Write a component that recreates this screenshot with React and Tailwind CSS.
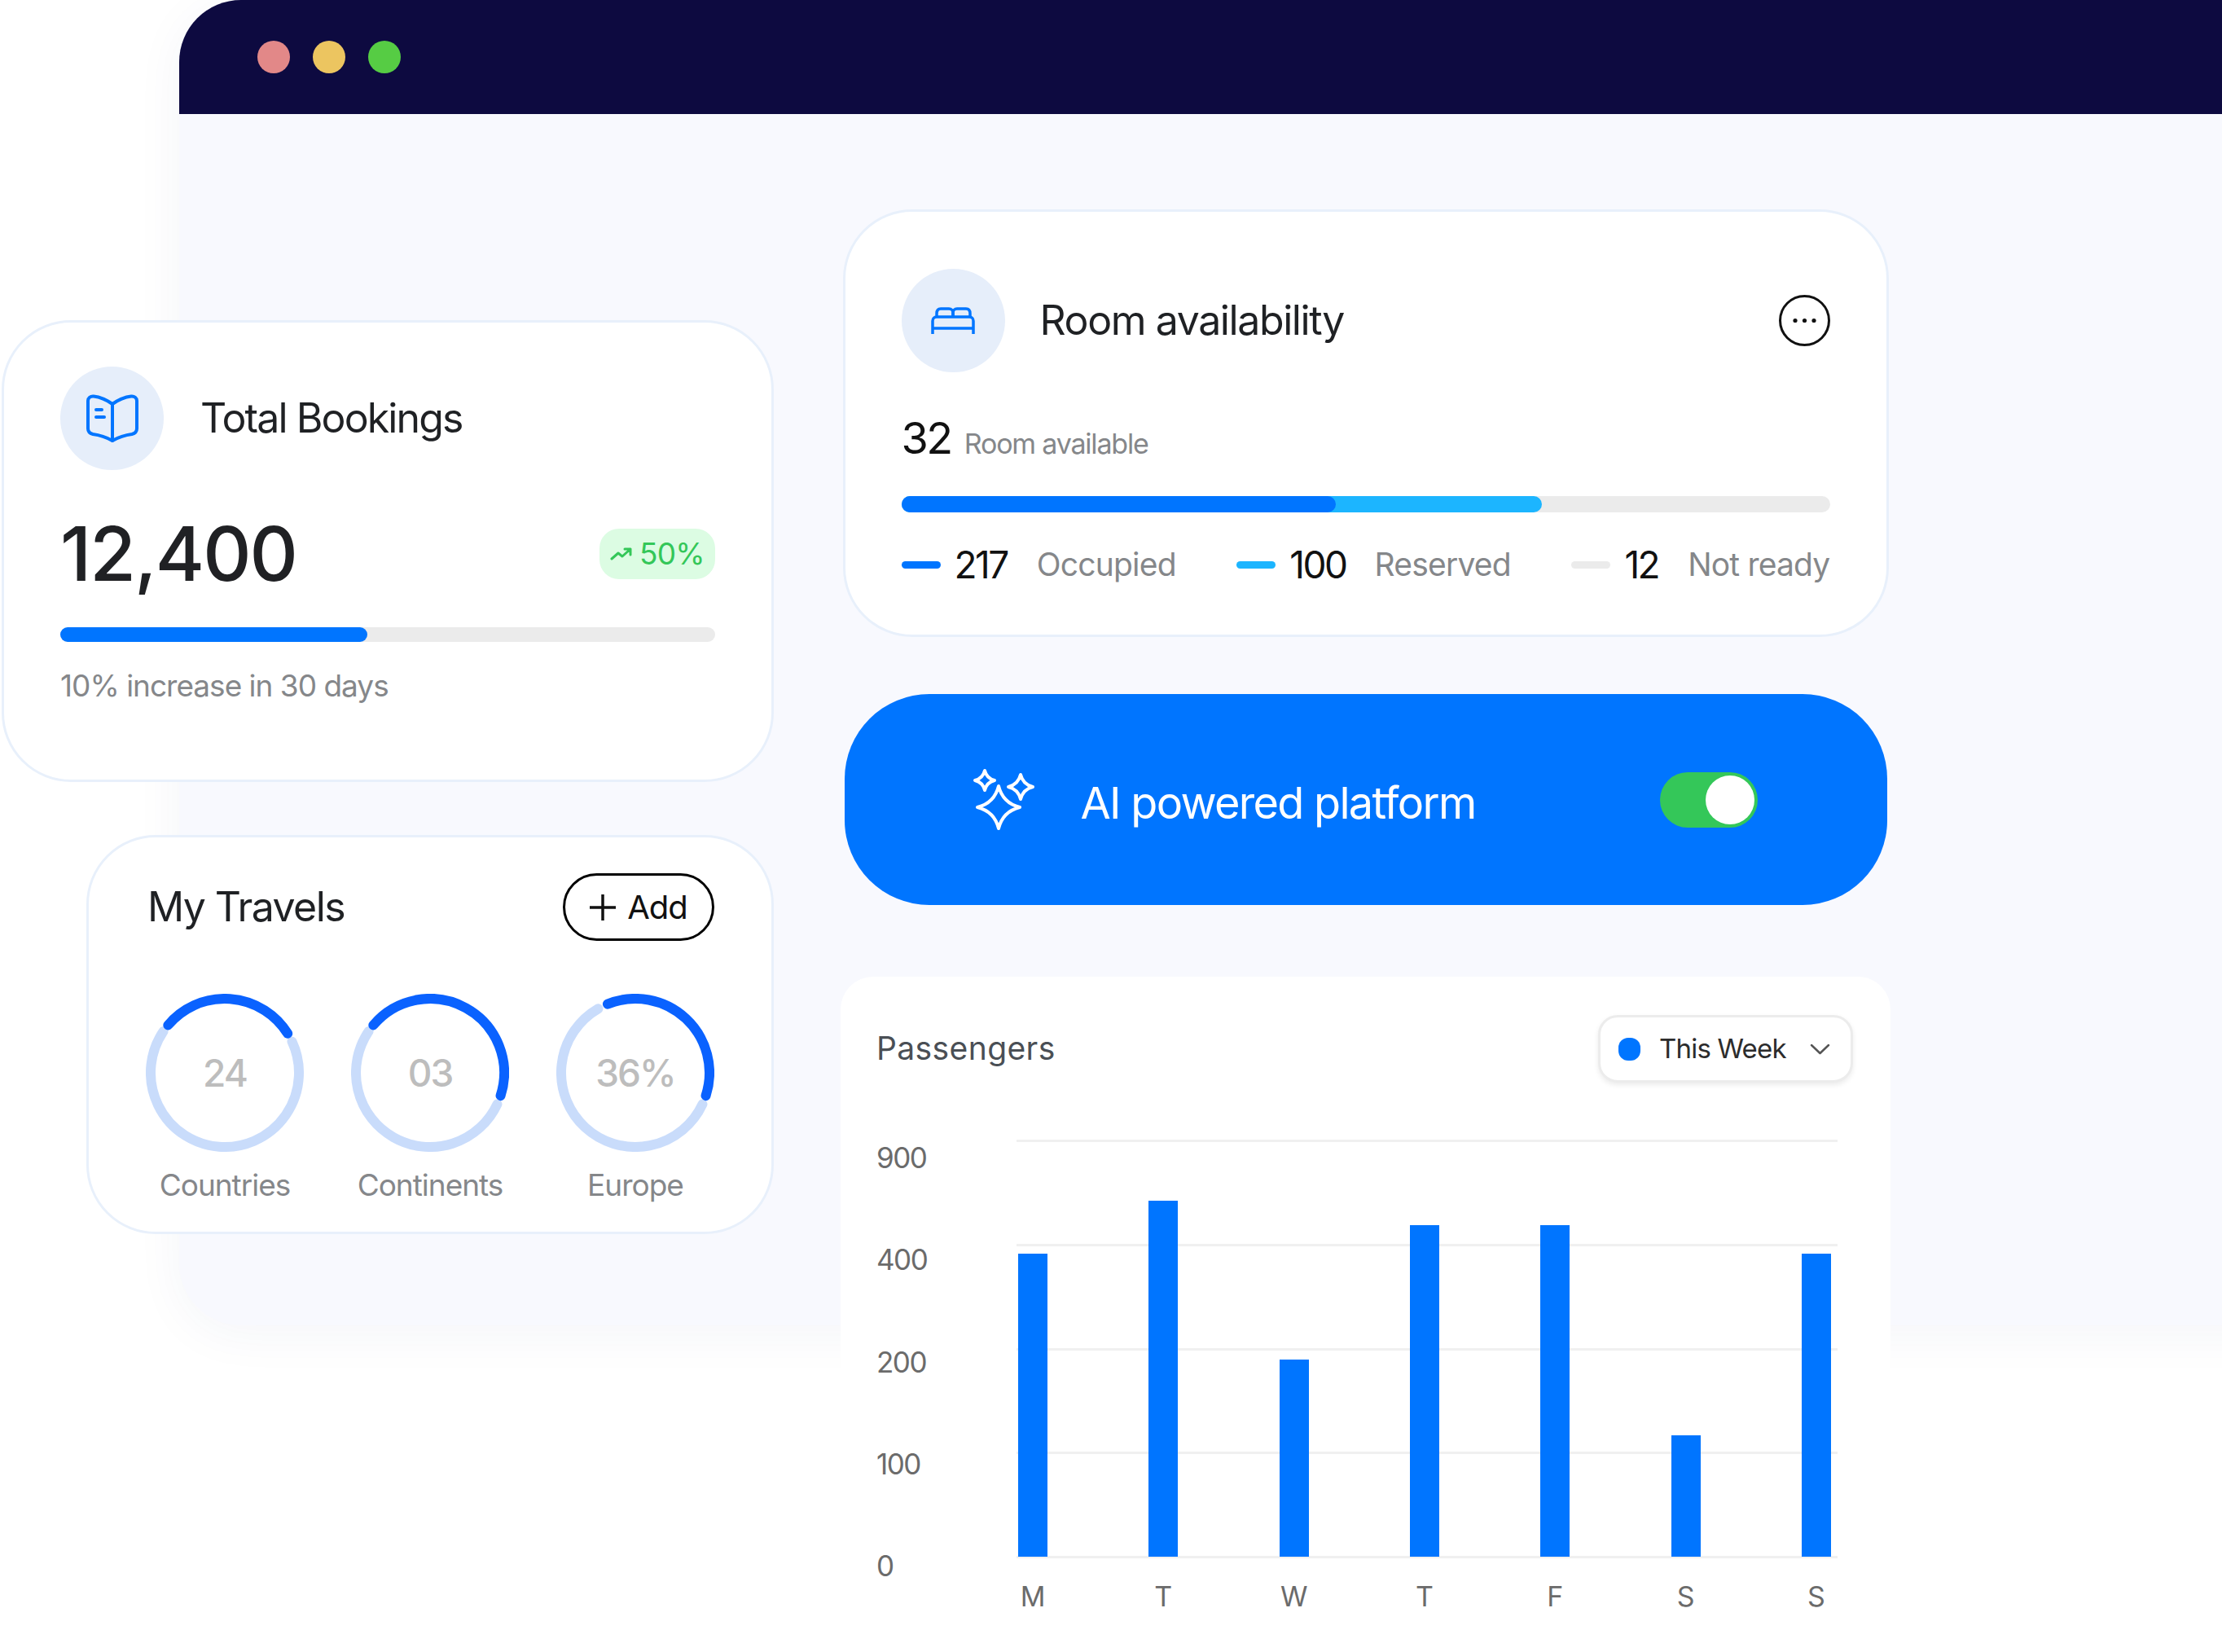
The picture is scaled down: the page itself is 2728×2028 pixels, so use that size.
const bars = [
  { day: 'M', height: 372 },
  { day: 'T', height: 437 },
  { day: 'W', height: 242 },
  { day: 'T', height: 407 },
  { day: 'F', height: 407 },
  { day: 'S', height: 149 },
  { day: 'S', height: 372 },
]

const rings = [
  { value: '24', label: 'Countries', blue: [-50, 58], track: [65, 304] },
  { value: '03', label: 'Continents', blue: [-50, 108], track: [115, 304] },
  { value: '36%', label: 'Europe', blue: [-22, 108], track: [115, 330] },
]

function arc(from, to) {
  const r = 91
  const point = (deg) => {
    const a = ((deg - 90) * Math.PI) / 180
    return `${97 + r * Math.cos(a)} ${97 + r * Math.sin(a)}`
  }
  const large = to - from > 180 ? 1 : 0
  return `M${point(from)} A${r} ${r} 0 ${large} 1 ${point(to)}`
}

function star(cx, cy, r) {
  const k = r * 0.2
  return `M${cx} ${cy - r} Q${cx + k} ${cy - k} ${cx + r} ${cy} Q${cx + k} ${cy + k} ${cx} ${cy + r} Q${cx - k} ${cy + k} ${cx - r} ${cy} Q${cx - k} ${cy - k} ${cx} ${cy - r}Z`
}

function BookIcon() {
  return (
    <svg width="64" height="60" viewBox="0 0 64 60" fill="none" stroke="#0075ff" strokeWidth="4" strokeLinecap="round" strokeLinejoin="round">
      <path d="M32 57V12C25 7 18 3.5 9 2.5C5 2 2 4.5 2 8V42C2 46 4 48 8 49C16 50 25 53 32 57Z" />
      <path d="M32 57V12C39 7 46 3.5 55 2.5C59 2 62 4.5 62 8V42C62 46 60 48 56 49C48 50 39 53 32 57Z" />
      <path d="M12 19H19M12 28H22" />
    </svg>
  )
}

function BedIcon() {
  return (
    <svg width="54" height="33" viewBox="0 0 54 33" fill="none" stroke="#0075ff" strokeWidth="3.5">
      <path d="M2 33V17C2 14 4 12 7 12H47C50 12 52 14 52 17V33" />
      <path d="M2 26H52" />
      <path d="M7 12V8C7 4 9 2 12 2H22C25 2 27 4 27 7V12" />
      <path d="M27 12V7C27 4 29 2 32 2H43C46 2 48 4 48 8V12" />
    </svg>
  )
}

function Ring({ ring }) {
  return (
    <div className="flex w-[194px] flex-col items-center">
      <div className="relative h-[194px] w-[194px]">
        <svg width="194" height="194" viewBox="0 0 194 194" fill="none" strokeWidth="12" strokeLinecap="round">
          <path d={arc(ring.track[0], ring.track[1])} stroke="#c9dcfb" />
          <path d={arc(ring.blue[0], ring.blue[1])} stroke="#0a62ff" />
        </svg>
        <span className="absolute inset-0 flex items-center justify-center text-[46px] font-medium tracking-[-2px] text-[#bdbdbd]">
          {ring.value}
        </span>
      </div>
      <span className="mt-[18px] whitespace-nowrap text-[37px] leading-[46px] tracking-[-1px] text-[#85878a]">
        {ring.label}
      </span>
    </div>
  )
}

function LegendItem({ color, value, label, gap }) {
  return (
    <div className="flex items-center">
      <span className={`h-[9px] w-[48px] rounded-full ${color}`}></span>
      <span className="ml-[17px] text-[46px] leading-[52px] tracking-[-2.5px] text-[#111]">{value}</span>
      <span className={`text-[39px] leading-[52px] tracking-[-0.8px] text-[#85878a] ${gap}`}>{label}</span>
    </div>
  )
}

export default function App() {
  return (
    <div className="relative h-[2028px] w-[2728px] overflow-hidden bg-white font-['Inter',sans-serif]">
      {/* browser window behind the cards */}
      <div className="absolute left-[220px] right-[-120px] top-0 h-[1627px] overflow-hidden rounded-tl-[76px] rounded-bl-[76px] bg-[#f8f9fe] shadow-[0_10px_60px_rgba(30,60,120,0.05)]">
        <div className="flex h-[140px] items-center gap-[28px] bg-[#0d0a40] pl-[96px]">
          <span className="h-[40px] w-[40px] rounded-full bg-[#e28888]"></span>
          <span className="h-[40px] w-[40px] rounded-full bg-[#ecc560]"></span>
          <span className="h-[40px] w-[40px] rounded-full bg-[#56cc44]"></span>
        </div>
      </div>

      <div className="absolute inset-0 flex items-start">
        {/* left column */}
        <div className="ml-[2px] mt-[393px] flex w-[948px] flex-col items-end gap-[65px]">
          <div className="h-[567px] w-[948px] rounded-[85px] border-[3px] border-[#e8f0fb] bg-white px-[69px] pt-[54px]">
            <div className="flex items-center gap-[45px]">
              <div className="flex h-[127px] w-[127px] items-center justify-center rounded-full bg-[#e6eefa]">
                <BookIcon />
              </div>
              <span className="text-[50px] tracking-[-1.9px] text-[#1f2124]">Total Bookings</span>
            </div>
            <div className="mt-[57px] flex h-[92px] items-center justify-between">
              <span className="text-[92px] font-medium leading-[92px] tracking-[-2px] text-[#202124]">12,400</span>
              <div className="flex h-[62px] w-[142px] items-center justify-center gap-[8px] rounded-[24px] bg-[#dcfce3]">
                <svg width="28" height="18" viewBox="0 0 28 18" fill="none" stroke="#34c759" strokeWidth="3" strokeLinecap="round" strokeLinejoin="round">
                  <path d="M2 15L10 8L15 12L25 3M18 3H25V10" />
                </svg>
                <span className="text-[37px] tracking-[-0.8px] text-[#34c759]">50%</span>
              </div>
            </div>
            <div className="mt-[44px] h-[18px] rounded-full bg-[#ebebeb]">
              <div className="h-[18px] w-[377px] rounded-full bg-[#0075ff]"></div>
            </div>
            <p className="mt-[32px] text-[37px] leading-[44px] tracking-[-1px] text-[#85878a]">10% increase in 30 days</p>
          </div>

          <div className="h-[490px] w-[844px] rounded-[85px] border-[3px] border-[#e8f0fb] bg-white px-[70px] pt-[44px]">
            <div className="flex items-center justify-between">
              <span className="pl-[2px] text-[50px] tracking-[-1.6px] text-[#1f2124]">My Travels</span>
              <button className="flex h-[83px] w-[186px] items-center justify-center gap-[14px] rounded-full border-[3px] border-black bg-white">
                <svg width="32" height="32" viewBox="0 0 32 32" fill="none" stroke="#111" strokeWidth="3.5">
                  <path d="M16 0V32M0 16H32" />
                </svg>
                <span className="text-[40px] tracking-[-1px] text-[#111]">Add</span>
              </button>
            </div>
            <div className="mt-[65px] flex gap-[58px]">
              {rings.map((ring) => (
                <Ring key={ring.label} ring={ring} />
              ))}
            </div>
          </div>
        </div>

        {/* right column */}
        <div className="ml-[82px] mt-[257px] flex w-[1289px] flex-col items-center">
          <div className="h-[525px] w-[1284px] rounded-[85px] border-[3px] border-[#e8f0fb] bg-white px-[69px] pt-[70px]">
            <div className="flex items-center gap-[43px]">
              <div className="flex h-[127px] w-[127px] items-center justify-center rounded-full bg-[#e6eefa]">
                <BedIcon />
              </div>
              <span className="text-[50px] tracking-[-1.4px] text-[#1f2124]">Room availability</span>
              <svg className="ml-auto" width="63" height="63" viewBox="0 0 63 63" fill="none">
                <circle cx="31.5" cy="31.5" r="30" stroke="#111" strokeWidth="3" />
                <circle cx="20" cy="31.5" r="2.6" fill="#111" />
                <circle cx="31.5" cy="31.5" r="2.6" fill="#111" />
                <circle cx="43" cy="31.5" r="2.6" fill="#111" />
              </svg>
            </div>
            <div className="mt-[51px] flex h-[60px] items-baseline gap-[16px]">
              <span className="text-[54px] leading-[60px] tracking-[-2.5px] text-[#111]">32</span>
              <span className="text-[34px] tracking-[-1.2px] text-[#85878a]">Room available</span>
            </div>
            <div className="mt-[41px] flex h-[20px] rounded-full bg-[#ebebeb]">
              <div className="relative h-[20px] w-[786px] rounded-full bg-[#1cb5ff]">
                <div className="h-[20px] w-[533px] rounded-full bg-[#0075ff]"></div>
              </div>
            </div>
            <div className="mt-[38px] flex justify-between">
              <LegendItem color="bg-[#0075ff]" value="217" label="Occupied" gap="ml-[36px]" />
              <LegendItem color="bg-[#1cb5ff]" value="100" label="Reserved" gap="ml-[35px]" />
              <LegendItem color="bg-[#ebebeb]" value="12" label="Not ready" gap="ml-[36px]" />
            </div>
          </div>

          <div className="mt-[70px] flex h-[259px] w-[1280px] items-center rounded-[104px] bg-[#0075ff] pl-[154px] pr-[159px]">
            <svg width="80" height="85" viewBox="0 0 80 85" fill="none" stroke="white" strokeWidth="4" strokeLinejoin="round">
              <path d={star(35, 52, 26)} />
              <path d={star(18, 19, 12)} />
              <path d={star(62, 27, 15)} />
            </svg>
            <span className="ml-[56px] mt-[8px] text-[54px] tracking-[-1.7px] text-white">AI powered platform</span>
            <div className="ml-auto flex h-[68px] w-[120px] items-center justify-end rounded-full bg-[#34c759] pr-[4px]">
              <span className="h-[60px] w-[60px] rounded-full bg-white"></span>
            </div>
          </div>

          <div className="mt-[88px] h-[828px] w-[1289px] rounded-[40px] bg-white pl-[44px] pr-[46px] pt-[47px]">
            <div className="flex items-center justify-between">
              <span className="text-[39px] tracking-[0.4px] text-[#4a4f55]">Passengers</span>
              <div className="flex h-[83px] w-[313px] items-center rounded-[24px] border-[3px] border-[#ececec] bg-white pl-[22px] shadow-[0_3px_6px_rgba(0,0,0,0.08)]">
                <span className="h-[28px] w-[27px] rounded-[12px] bg-[#0075ff]"></span>
                <span className="ml-[23px] text-[33px] tracking-[-0.8px] text-[#2c2c2c]">This Week</span>
                <svg className="ml-[29px]" width="25" height="14" viewBox="0 0 25 14" fill="none" stroke="#555" strokeWidth="2.5" strokeLinecap="round" strokeLinejoin="round">
                  <path d="M2 2L12.5 12L23 2" />
                </svg>
              </div>
            </div>

            <div className="mt-[70px] flex items-start">
              <div className="flex h-[545px] w-[172px] flex-col justify-between text-[35px] leading-[44px] tracking-[-1.5px] text-[#6b6b6b]">
                <span>900</span>
                <span>400</span>
                <span>200</span>
                <span>100</span>
                <span>0</span>
              </div>
              <div className="w-[1008px]">
                <div className="relative h-[514px]">
                  {/* grid lines sit under the bars */}
                  <div className="absolute inset-0 flex flex-col justify-between">
                    <div className="h-[3px] bg-[#f0f0f0]"></div>
                    <div className="h-[3px] bg-[#f0f0f0]"></div>
                    <div className="h-[3px] bg-[#f0f0f0]"></div>
                    <div className="h-[3px] bg-[#f0f0f0]"></div>
                    <div className="h-[3px] bg-[#f0f0f0]"></div>
                  </div>
                  <div className="relative flex h-[512px] items-end justify-between pl-[2px] pr-[8px]">
                    {bars.map((bar, i) => (
                      <div key={i} className="w-[36px] bg-[#0075ff]" style={{ height: bar.height }}></div>
                    ))}
                  </div>
                </div>
                <div className="mt-[25px] flex justify-between pl-[2px] pr-[8px]">
                  {bars.map((bar, i) => (
                    <div key={i} className="flex w-[36px] justify-center text-[34px] leading-[44px] text-[#6b6b6b]">
                      {bar.day}
                    </div>
                  ))}
                </div>
              </div>
            </div>
          </div>
        </div>
      </div>
    </div>
  )
}
